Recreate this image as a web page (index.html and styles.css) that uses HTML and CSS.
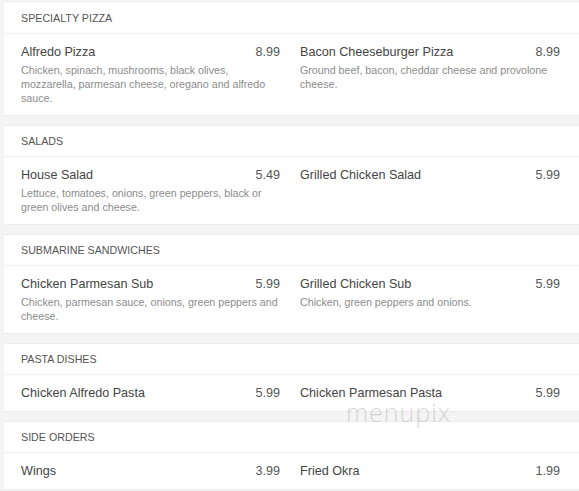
FILE: index.html
```html
<!DOCTYPE html>
<html>
<head>
<meta charset="utf-8">
<link rel="stylesheet" href="styles.css">
</head>
<body>
<div class="page">
  <section class="menu-section first">
    <div class="section-head">SPECIALTY PIZZA</div>
    <div class="items">
      <div class="item">
        <div class="item-top"><span class="name">Alfredo Pizza</span><span class="price">8.99</span></div>
        <div class="desc">Chicken, spinach, mushrooms, black olives, mozzarella, parmesan cheese, oregano and alfredo sauce.</div>
      </div>
      <div class="item">
        <div class="item-top"><span class="name">Bacon Cheeseburger Pizza</span><span class="price">8.99</span></div>
        <div class="desc">Ground beef, bacon, cheddar cheese and provolone cheese.</div>
      </div>
    </div>
  </section>
  <section class="menu-section">
    <div class="section-head">SALADS</div>
    <div class="items">
      <div class="item">
        <div class="item-top"><span class="name">House Salad</span><span class="price">5.49</span></div>
        <div class="desc">Lettuce, tomatoes, onions, green peppers, black or green olives and cheese.</div>
      </div>
      <div class="item">
        <div class="item-top"><span class="name">Grilled Chicken Salad</span><span class="price">5.99</span></div>
      </div>
    </div>
  </section>
  <section class="menu-section">
    <div class="section-head">SUBMARINE SANDWICHES</div>
    <div class="items">
      <div class="item">
        <div class="item-top"><span class="name">Chicken Parmesan Sub</span><span class="price">5.99</span></div>
        <div class="desc">Chicken, parmesan sauce, onions, green peppers and cheese.</div>
      </div>
      <div class="item">
        <div class="item-top"><span class="name">Grilled Chicken Sub</span><span class="price">5.99</span></div>
        <div class="desc">Chicken, green peppers and onions.</div>
      </div>
    </div>
  </section>
  <section class="menu-section">
    <div class="section-head">PASTA DISHES</div>
    <div class="items">
      <div class="item">
        <div class="item-top"><span class="name">Chicken Alfredo Pasta</span><span class="price">5.99</span></div>
      </div>
      <div class="item">
        <div class="item-top"><span class="name">Chicken Parmesan Pasta</span><span class="price">5.99</span></div>
      </div>
    </div>
  </section>
  <section class="menu-section">
    <div class="section-head">SIDE ORDERS</div>
    <div class="items">
      <div class="item">
        <div class="item-top"><span class="name">Wings</span><span class="price">3.99</span></div>
      </div>
      <div class="item">
        <div class="item-top"><span class="name">Fried Okra</span><span class="price">1.99</span></div>
      </div>
    </div>
  </section>
  <div class="watermark">menupix</div>
</div>
</body>
</html>
```
FILE: styles.css
```css
html, body {
  margin: 0;
  padding: 0;
  background: #f4f4f4;
  font-family: "Liberation Sans", Arial, sans-serif;
}
.page {
  position: relative;
  padding: 3px 0 0 4px;
  overflow: hidden;
}
.menu-section {
  background: #fff;
  border-top: 1px solid #ececec;
  border-bottom: 1px solid #ececec;
  margin-bottom: 9px;
}
.menu-section.first {
  border-top: 0;
}
.section-head {
  height: 30px;
  line-height: 30px;
  padding-left: 17px;
  font-size: 10.7px;
  color: #555;
  border-bottom: 1px solid #efefef;
}
.items {
  display: grid;
  grid-template-columns: 279px 280px;
  padding: 0 16px 0 7px;
}
.item {
  padding: 10px 10px 10px 10px;
}
.item-top {
  display: flex;
  justify-content: space-between;
  align-items: baseline;
  height: 16px;
  line-height: 16px;
  font-size: 12.6px;
  color: #444;
}
.price {
  color: #555;
}
.desc {
  margin-top: 3px;
  font-size: 10.7px;
  line-height: 14px;
  color: #8c8c8c;
}
.watermark {
  position: absolute;
  left: 346px;
  top: 402px;
  font-size: 25px;
  line-height: 20px;
  font-weight: 300;
  letter-spacing: 1px;
  color: rgba(170, 170, 170, 0.45);
  font-family: "Open Sans", sans-serif;
}
```
